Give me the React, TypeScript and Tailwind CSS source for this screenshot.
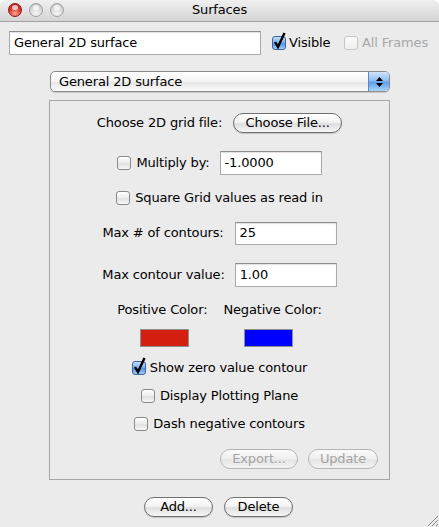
import type { ReactNode } from "react";
import clsx from "clsx";

const font = "font-['DejaVu_Sans',sans-serif] text-[13px] tracking-[-0.15px] text-black";

function Light({ red }: { red?: boolean }) {
  return (
    <span
      className={clsx(
        "relative block h-[14px] w-[14px] shrink-0 rounded-full border",
        red
          ? "border-[#8a1a16] bg-[radial-gradient(circle_at_50%_80%,#f7a594_0%,#dc3b2f_50%,#a8170f_100%)]"
          : "border-[#a0a0a0] bg-[radial-gradient(circle_at_50%_80%,#f6f6f6_0%,#d8d8d8_55%,#b8b8b8_100%)]",
      )}
    >
      <span className="absolute top-[1px] left-[3px] h-[5px] w-[6px] rounded-full bg-white/70" />
    </span>
  );
}

function Check({ checked, disabled }: { checked?: boolean; disabled?: boolean }) {
  return (
    <span
      className={clsx(
        "relative inline-block h-[14px] w-[14px] shrink-0 rounded-[3px] border",
        checked
          ? "border-[#3d63a4] bg-[linear-gradient(#c4ddf8,#78acea_50%,#5092e2_55%,#a2cef8)]"
          : disabled
            ? "border-[#c6c6c6] bg-[linear-gradient(#fbfbfb,#efefef)]"
            : "border-[#8a8a8a] bg-[linear-gradient(#ffffff,#ececec_50%,#e0e0e0_55%,#f8f8f8)]",
      )}
    >
      {checked && (
        <svg className="absolute -top-[5px] left-[0px] h-[17px] w-[13px]" viewBox="0 0 13 17">
          <path d="M2 10 L5 15 L11.5 1" stroke="black" strokeWidth="2.4" fill="none" />
        </svg>
      )}
    </span>
  );
}

function AquaButton({ children, className, disabled }: { children: ReactNode; className?: string; disabled?: boolean }) {
  return (
    <div
      className={clsx(
        "flex h-[20px] items-center justify-center rounded-full border",
        disabled
          ? "border-[#b5b5b5] bg-[linear-gradient(#fafafa,#efefef_50%,#e4e4e4_55%,#f4f4f4)] text-[#a3a3a3]"
          : "border-[#6f6f6f] bg-[linear-gradient(#ffffff,#f3f3f3_45%,#dedede_55%,#f7f7f7)] shadow-[0_1px_1px_rgba(0,0,0,0.18)]",
        className,
      )}
    >
      {children}
    </div>
  );
}

function Field({ value, className }: { value: string; className?: string }) {
  return (
    <div
      className={clsx(
        "flex items-center border border-[#a9a9a9] border-t-[#8d8d8d] bg-white pl-[4px] shadow-[inset_0_1px_1px_rgba(0,0,0,0.12)]",
        className,
      )}
    >
      {value}
    </div>
  );
}

export default function App() {
  return (
    <div className={clsx("h-[527px] w-[439px] bg-white", font)}>
      <div className="relative flex h-full flex-col overflow-hidden rounded-t-[6px] bg-[#ebebeb]">
        {/* title bar */}
        <div className="relative flex h-[22px] shrink-0 items-center justify-center border-b border-[#a2a2a2] bg-[linear-gradient(#f0f0f0,#d5d5d5)]">
          <div className="absolute top-[3px] left-[8px] flex gap-[7px]">
            <Light red />
            <Light />
            <Light />
          </div>
          <span className="-mt-[1px]">Surfaces</span>
        </div>

        {/* name + visibility */}
        <div className="mt-[9px] flex h-[24px] items-center">
          <Field value="General 2D surface" className="ml-[9px] h-[24px] w-[252px]" />
          <span className="ml-[11px] flex">
            <Check checked />
          </span>
          <span className="ml-[3px] w-[55px]">Visible</span>
          <Check disabled />
          <span className="ml-[4px] text-[#a8a8a8]">All Frames</span>
        </div>

        {/* popup */}
        <div className="mt-[16px] ml-[50px] flex h-[21px] w-[340px] overflow-hidden rounded-[5px] border border-[#8c8c8c] bg-[linear-gradient(#ffffff,#f4f4f4_50%,#e6e6e6_55%,#fbfbfb)] shadow-[0_1px_1px_rgba(0,0,0,0.15)]">
          <span className="flex-1 pt-[1px] pl-[8px] leading-[18px]">General 2D surface</span>
          <span className="flex w-[21px] flex-col items-center justify-center gap-[2px] border-l border-[#5f86c0] bg-[linear-gradient(#cfe4fb,#8bbcf2_48%,#5a9ceb_52%,#a8d4fb)]">
            <svg width="7" height="4" viewBox="0 0 7 4">
              <path d="M0 4 L3.5 0 L7 4 Z" fill="black" />
            </svg>
            <svg width="7" height="4" viewBox="0 0 7 4">
              <path d="M0 0 L7 0 L3.5 4 Z" fill="black" />
            </svg>
          </span>
        </div>

        {/* group box */}
        <div className="mt-[8px] ml-[49px] flex h-[380px] w-[341px] flex-col border border-[#a5a5a5]">
          <div className="mt-[10px] flex h-[24px] items-center justify-center">
            <span>Choose 2D grid file:</span>
            <AquaButton className="ml-[11px] w-[109px]">Choose File...</AquaButton>
          </div>

          <div className="mt-[16px] flex h-[24px] items-center justify-center">
            <Check />
            <span className="ml-[5px]">Multiply by:</span>
            <Field value="-1.0000" className="ml-[10px] h-[24px] w-[102px]" />
          </div>

          <div className="mt-[11px] flex h-[24px] items-center justify-center">
            <Check />
            <span className="ml-[5px]">Square Grid values as read in</span>
          </div>

          <div className="mt-[11px] flex h-[24px] items-center justify-center">
            <span>Max # of contours:</span>
            <Field value="25" className="ml-[11px] h-[23px] w-[102px]" />
          </div>

          <div className="mt-[18px] flex h-[24px] items-center justify-center">
            <span>Max contour value:</span>
            <Field value="1.00" className="ml-[10px] h-[24px] w-[102px]" />
          </div>

          <div className="mt-[13px] flex h-[20px] items-center justify-center gap-[16px]">
            <span>Positive Color:</span>
            <span>Negative Color:</span>
          </div>

          <div className="mt-[9px] flex h-[18px] items-center justify-center gap-[55px] pr-[6px]">
            <span className="h-[18px] w-[49px] border border-[#8e8e8e] bg-[#d41f10]" />
            <span className="h-[18px] w-[49px] border border-[#8e8e8e] bg-[#0000ff]" />
          </div>

          <div className="mt-[11px] flex h-[20px] items-center justify-center">
            <Check checked />
            <span className="ml-[4px]">Show zero value contour</span>
          </div>

          <div className="mt-[8px] flex h-[20px] items-center justify-center">
            <Check />
            <span className="ml-[5px]">Display Plotting Plane</span>
          </div>

          <div className="mt-[8px] flex h-[20px] items-center justify-center">
            <Check />
            <span className="ml-[5px]">Dash negative contours</span>
          </div>

          <div className="mt-[15px] flex h-[20px] items-center justify-end gap-[10px] pr-[11px]">
            <AquaButton disabled className="w-[78px]">
              Export...
            </AquaButton>
            <AquaButton disabled className="w-[70px]">
              Update
            </AquaButton>
          </div>
        </div>

        {/* add / delete */}
        <div className="mt-[17px] flex h-[20px] items-center justify-center gap-[11px] pr-[2px]">
          <AquaButton className="w-[69px]">Add...</AquaButton>
          <AquaButton className="w-[69px]">Delete</AquaButton>
        </div>

        {/* resize grip */}
        <svg className="absolute right-[1px] bottom-[1px]" width="11" height="11" viewBox="0 0 11 11">
          <path d="M1 11 L11 1 M5 11 L11 5 M9 11 L11 9" stroke="#8a8a8a" strokeWidth="1" />
        </svg>
      </div>
    </div>
  );
}
